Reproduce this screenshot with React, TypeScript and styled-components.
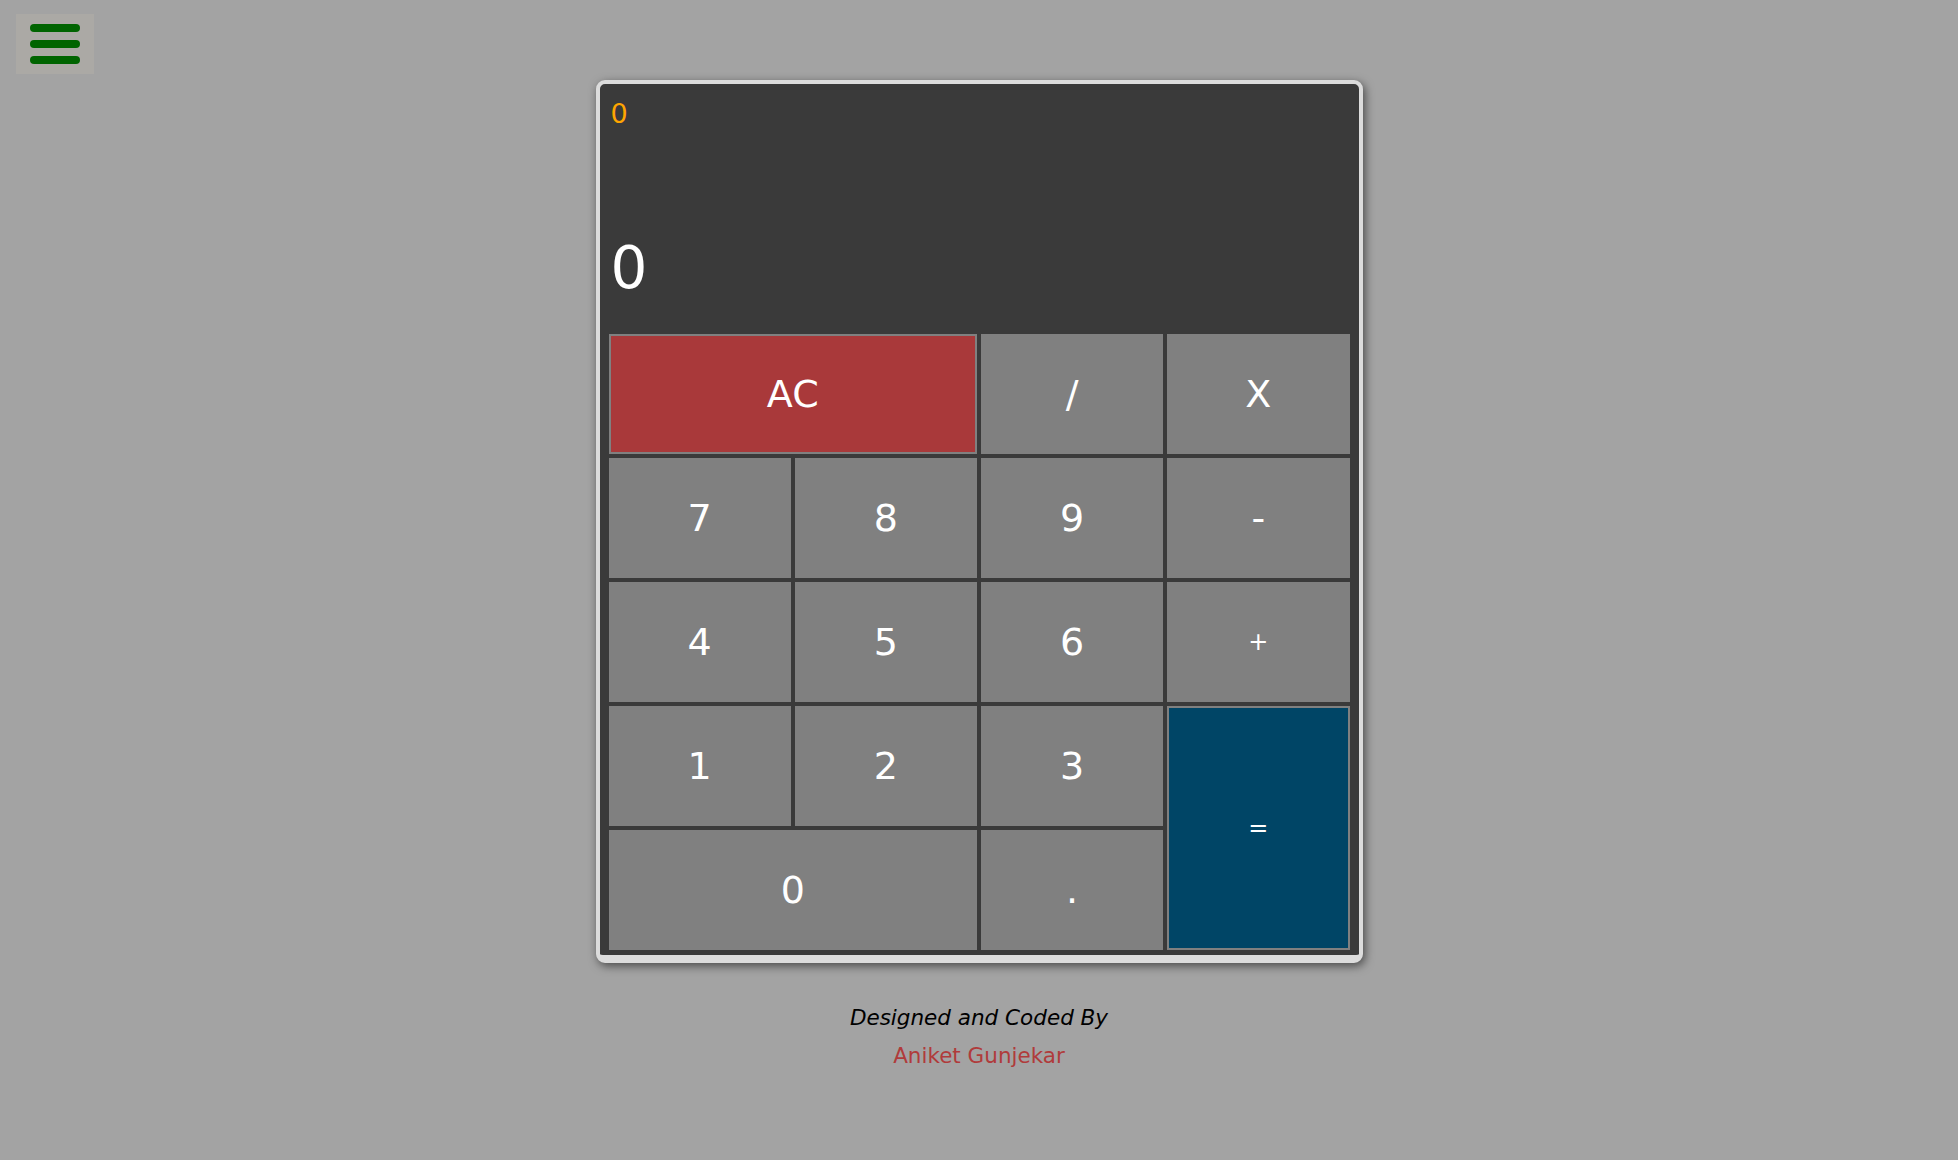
import React from "react";
import styled, { createGlobalStyle } from "styled-components";

const GlobalStyle = createGlobalStyle`
  html, body {
    margin: 0;
    padding: 0;
    background: #a3a3a3;
    font-family: "DejaVu Sans", "Liberation Sans", sans-serif;
  }
  * { box-sizing: border-box; }
`;

const Page = styled.div`
  min-height: 1160px;
  display: flex;
  flex-direction: column;
  align-items: center;
  padding-top: 14px;
`;

const MenuButton = styled.button`
  align-self: flex-start;
  margin-left: 16px;
  width: 78px;
  height: 60px;
  border: none;
  padding: 0;
  background: #aba9a5;
  display: flex;
  flex-direction: column;
  align-items: center;
  justify-content: center;
  gap: 8px;
  cursor: pointer;
`;

const MenuBar = styled.span`
  display: block;
  width: 50px;
  height: 8px;
  border-radius: 4px;
  background: #006400;
`;

const Calculator = styled.div`
  margin-top: 6px;
  width: 767px;
  border: 4px solid #dcdcdc;
  border-bottom-width: 8px;
  border-radius: 9px;
  background: #3a3a3a;
  box-shadow: 2px 3px 10px rgba(0, 0, 0, 0.55);
  padding: 0 9px 5px 9px;
  display: flex;
  flex-direction: column;
`;

const Display = styled.div`
  height: 250px;
  display: flex;
  flex-direction: column;
  padding: 16px 0 37px 2px;
  color: #fff;
`;

const Previous = styled.div`
  font-size: 27px;
  line-height: 1;
  color: #ffa500;
`;

const Current = styled.div`
  margin-top: auto;
  font-size: 58px;
  line-height: 1;
  color: #fff;
`;

const Keys = styled.div`
  display: grid;
  grid-template-columns: repeat(4, 1fr);
  grid-auto-rows: 120px;
  gap: 4px;
`;

type Tone = "plain" | "clear" | "equals";

const Key = styled.button<{ $tone: Tone; $cols?: number; $rows?: number; $small?: boolean }>`
  grid-column: span ${(p) => p.$cols ?? 1};
  grid-row: span ${(p) => p.$rows ?? 1};
  border: 2px solid #808080;
  border-radius: 0;
  background: ${(p) =>
    p.$tone === "clear" ? "#a9393a" : p.$tone === "equals" ? "#004566" : "#808080"};
  color: #fff;
  font-family: "DejaVu Sans", "Liberation Sans", sans-serif;
  font-size: ${(p) => (p.$small ? "24px" : "38px")};
  font-weight: 400;
  display: flex;
  align-items: center;
  justify-content: center;
  padding: 0;
  cursor: pointer;
`;

const Footer = styled.div`
  margin-top: 36px;
  text-align: center;
  font-size: 21.5px;
  line-height: 38px;
`;

const Credit = styled.div`
  font-style: italic;
  color: #000;
`;

const Author = styled.div`
  color: #b03b3b;
`;

type KeyDef = { label: string; tone?: Tone; cols?: number; rows?: number; small?: boolean };

const keys: KeyDef[] = [
  { label: "AC", tone: "clear", cols: 2 },
  { label: "/" },
  { label: "X" },
  { label: "7" },
  { label: "8" },
  { label: "9" },
  { label: "-" },
  { label: "4" },
  { label: "5" },
  { label: "6" },
  { label: "+", small: true },
  { label: "1" },
  { label: "2" },
  { label: "3" },
  { label: "=", tone: "equals", rows: 2, small: true },
  { label: "0", cols: 2 },
  { label: "." },
];

export default function App() {
  return (
    <>
      <GlobalStyle />
      <Page>
        <MenuButton aria-label="menu">
          <MenuBar />
          <MenuBar />
          <MenuBar />
        </MenuButton>
        <Calculator>
          <Display>
            <Previous>0</Previous>
            <Current>0</Current>
          </Display>
          <Keys>
            {keys.map((k) => (
              <Key
                key={k.label}
                $tone={k.tone ?? "plain"}
                $cols={k.cols}
                $rows={k.rows}
                $small={k.small}
              >
                {k.label}
              </Key>
            ))}
          </Keys>
        </Calculator>
        <Footer>
          <Credit>Designed and Coded By</Credit>
          <Author>Aniket Gunjekar</Author>
        </Footer>
      </Page>
    </>
  );
}
